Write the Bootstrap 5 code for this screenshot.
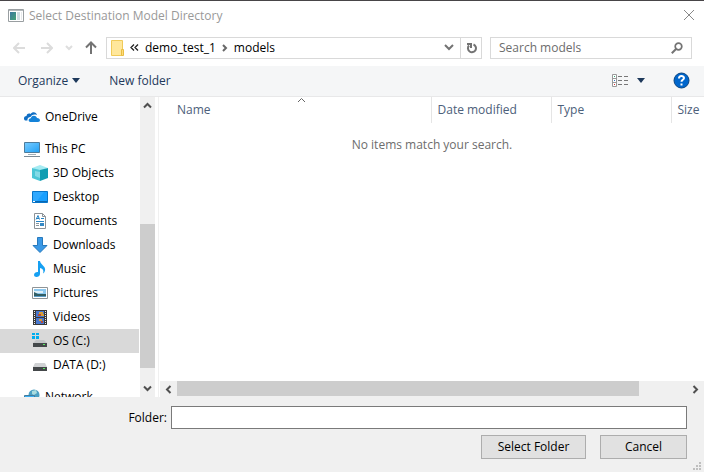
<!DOCTYPE html>
<html lang="en">
<head>
<meta charset="utf-8">
<meta name="viewport" content="width=device-width, initial-scale=1">
<title>Select Destination Model Directory</title>
<link href="https://cdn.jsdelivr.net/npm/bootstrap@5.3.0/dist/css/bootstrap.min.css" rel="stylesheet">
<style>
  body { font-family: "Open Sans", "Noto Sans", sans-serif; font-size: 12px; line-height: 16px; color: #000; background: #fff; overflow: hidden; }
  button, input { font: inherit; color: inherit; }
  svg { display: block; flex: none; }
  .dialog { border-top: 1px solid #484548; }
  .titlebar { height: 32px; padding: 0 8px; color: #999; gap: 5px; }
  .plain { border: 0; background: none; padding: 0; }
  .addressbar { padding: 5px 12px 7px; height: 34px; }
  .field { border: 1px solid #d9d9d9; height: 22px; background: #fff; }
  .nav-tools { width: 94px; padding-left: 1px; gap: 12px; }
  .crumb { color: #000; text-decoration: none; }
  .crumbs { gap: 6px; padding-left: 4px; }
  .search { width: 202px; }
  .search input { border: 0; outline: 0; padding: 0 0 0 8px; min-width: 0; color: #6d6d6d; background: none; }
  .search input::placeholder { color: #6d6d6d; opacity: 1; }
  .refresh { width: 21px; height: 20px; border-left: 1px solid #d9d9d9; }
  .commands { height: 31px; background: #f5f6f7; border-bottom: 1px solid #e8e8e9; color: #1e395b; padding: 0 14px 0 18px; }
  .new-folder { margin-left: 29px; }
  .panes { min-height: 0; }
  .tree { width: 140px; padding-top: 8px; }
  .tree a { height: 24px; flex: none; color: #000; text-decoration: none; padding-left: 24px; gap: 5px; margin-right: 1px; }
  .tree a.child { padding-left: 32px; }
  .tree a.current { background: #d9d9d9; }
  .tree .group { margin-top: 8px; }
  .bar { background: #f0f0f0; }
  .bar-v { width: 15px; }
  .bar-h { height: 16px; }
  .thumb { background: #cdcdcd; }
  .bar-v .thumb { flex: 0 0 48%; }
  .bar-h .thumb { flex: 0 0 85%; height: 15px; }
  .bar-v .before { flex: 1 1 0; }
  .bar-v .after { flex: 0 0 4%; }
  .bar-v button, .bar-h button { width: 17px; height: 17px; flex: none; }
  .bar-v button { width: 15px; }
  .split { width: 5px; border-left: 1px solid #fff; }
  .split::after { content: ""; display: block; width: 1px; height: 100%; margin-left: 2px; background: #f0f0f0; }
  .files { table-layout: fixed; }
  .files th { height: 26px; font-weight: 400; color: #4c607a; padding: 0 6px; border-right: 1px solid #e5e5e5; white-space: nowrap; position: relative; }
  .files th:first-child { padding-left: 17px; }
  .files th:last-child { border: 0; width: 33px; padding-right: 0; }
  .files .mid { width: 120px; }
  .files td { color: #6d6d6d; padding: 14px 0; }
  .sort { position: absolute; left: 137px; top: 0; }
  .footer-bar { background: #f0f0f0; padding: 9px 17px 13px; gap: 6px; position: relative; }
  .folder { border: 1px solid #7a7a7a; height: 23px; background: #fff; padding: 0 4px; border-radius: 0; min-width: 0; }
  .folder-label { width: 150px; }
  .buttons { gap: 14px; }
  .push { border: 1px solid #adadad; background: #e1e1e1; height: 24px; padding: 0; }
  .push.wide { width: 105px; }
  .push.short { width: 87px; }
  .grip { position: absolute; right: 3px; bottom: 2px; }
</style>
<script src="https://cdn.jsdelivr.net/npm/bootstrap@5.3.0/dist/js/bootstrap.bundle.min.js"></script>
</head>
<body>
<div class="dialog d-flex flex-column vh-100">
  <header class="titlebar d-flex align-items-center">
    <svg width="16" height="14" viewBox="0 0 16 14"><defs><linearGradient id="gw" x2="1" y2="1"><stop stop-color="#3a78a0"/><stop offset="1" stop-color="#46a376"/></linearGradient></defs><path fill="#fff" stroke="#999ea1" d="M.5.5h15v12H.5z"/><path fill="#b4babd" d="M1 1h14v1H1z"/><path fill="url(#gw)" d="M2 3h6v8H2z"/><path fill="#cfdde2" d="M9 3h3v8H9z"/><path fill="#e6e9eb" d="M13 3h1v8h-1z"/></svg>
    <span class="flex-grow-1">Select Destination Model Directory</span>
    <button class="plain" aria-label="Close"><svg width="14" height="14" viewBox="0 0 14 14"><path d="M2 1l10 10M12 1L2 11" stroke="#888" fill="none"/></svg></button>
  </header>

  <div class="addressbar d-flex align-items-center">
    <div class="nav-tools d-flex align-items-center">
      <button class="plain" aria-label="Back"><svg width="12" height="12" viewBox="0 0 12 12"><path d="M12 6H1M6 1L1 6l5 5" stroke="#dcdcdc" stroke-width="2" fill="none"/></svg></button>
      <button class="plain ms-1" aria-label="Forward"><svg width="12" height="12" viewBox="0 0 12 12"><path d="M0 6h11M6 1l5 5-5 5" stroke="#dcdcdc" stroke-width="2" fill="none"/></svg></button>
      <button class="plain" aria-label="Recent locations"><svg width="8" height="6" viewBox="0 0 8 6"><path d="M1 1l3 3 3-3" stroke="#dedede" stroke-width="2" fill="none"/></svg></button>
      <button class="plain me-auto" aria-label="Up"><svg width="12" height="13" viewBox="0 0 12 13"><path d="M6 13V2M1 6.500l5-5 5 5" stroke="#737373" stroke-width="2" fill="none"/></svg></button>
    </div>
    <nav class="field crumbs d-flex align-items-center flex-grow-1" aria-label="Address">
      <svg width="13" height="16" viewBox="0 0 13 16"><path fill="#ffe79b" stroke="#f0ca59" d="M.5.5h11v15H.5z"/><path fill="#ffdc78" stroke="#e9bd43" d="M10.500 9.500h2v6h-2z"/></svg>
      <svg width="9" height="7" viewBox="0 0 9 7"><path d="M4 .5L1 3.500l3 3M8 .5L5 3.500l3 3" stroke="#222" stroke-width="1.300" fill="none"/></svg>
      <a class="crumb" href="#">demo_test_1</a>
      <svg width="6" height="8" viewBox="0 0 6 8"><path d="M1 1l3 3-3 3" stroke="#686868" stroke-width="2" fill="none"/></svg>
      <a class="crumb flex-grow-1" href="#">models</a>
      <button class="plain" aria-label="Previous locations"><svg width="10" height="7" viewBox="0 0 10 7"><path d="M1 1l4 4 4-4" stroke="#737373" stroke-width="2" fill="none"/></svg></button>
      <button class="plain refresh d-flex align-items-center justify-content-center" aria-label="Refresh"><svg width="11" height="12" viewBox="0 0 11 12"><path d="M7.500 2.500A4 4 0 1 1 3 3.500" stroke="#737373" stroke-width="2" fill="none"/><path d="M1 1h5v5H4V3H1z" fill="#737373"/></svg></button>
    </nav>
    <div class="field search d-flex align-items-center ms-2">
      <input class="flex-grow-1" type="text" placeholder="Search models" aria-label="Search models">
      <svg class="me-2" width="12" height="12" viewBox="0 0 12 12"><circle cx="7.500" cy="4.500" r="3.300" fill="none" stroke="#737373" stroke-width="1.700"/><path d="M5.500 6.500L.8 11.200" stroke="#737373" stroke-width="2"/></svg>
    </div>
  </div>

  <div class="commands d-flex align-items-center flex-shrink-0">
    <button class="plain d-flex align-items-center">Organize <svg class="ms-1" width="8" height="5" viewBox="0 0 8 5"><path fill="#1e395b" d="M0 0h8L4 5z"/></svg></button>
    <button class="plain new-folder">New folder</button>
    <button class="plain ms-auto d-flex align-items-center" aria-label="Change view"><svg width="17" height="13" viewBox="0 0 17 13"><path fill="#fff" stroke="#999" d="M.5.500h4v12h-4zM.5 4.500h4M.5 8.500h4"/><path fill="#3a7" d="M2 2h1v1H2z"/><path fill="#37c" d="M2 6h1v1H2z"/><path fill="#d33" d="M2 10h1v1H2z"/><path stroke="#777" stroke-dasharray="4 2" d="M6 2.500h10M6 6.500h10M6 10.500h10"/></svg><svg class="ms-2" width="8" height="5" viewBox="0 0 8 5"><path fill="#1e395b" d="M0 0h8L4 5z"/></svg></button>
    <button class="plain ms-4 ps-1" aria-label="Help"><svg width="17" height="17" viewBox="0 0 17 17"><circle cx="8.500" cy="8.500" r="7.500" fill="#0066cc" stroke="#0b4580"/><path d="M6 6.500C6 3.300 11 3.500 11 6c0 1.800-2.500 1.800-2.500 3.800" fill="none" stroke="#fff" stroke-width="2"/><path fill="#fff" d="M7.500 11.500h2v2h-2z"/></svg></button>
  </div>

  <main class="panes d-flex flex-grow-1">
    <nav class="tree d-flex flex-column flex-shrink-0 overflow-hidden" aria-label="Folders">
      <a href="#" class="d-flex align-items-center"><svg width="16" height="16" viewBox="0 0 16 16"><path fill="#0f6ec4" d="M1 11.500c-2-1.500-1-4.500 1.500-4.500C3 4.500 5 4 6.500 5 8.500 2 12.500 3 13 6 9.500 5 7.500 6 6.500 8 4.500 8 3 9.500 3.500 11.500z"/><path fill="#1482d8" d="M6.500 13C4 13 4 9.500 6.800 9.300 7.500 6 12 6 13 9c3.500 0 4 4 1 4z"/></svg>OneDrive</a>
      <a href="#" class="d-flex align-items-center group"><svg width="16" height="16" viewBox="0 0 16 16"><defs><linearGradient id="gb" x2="1" y2="1"><stop stop-color="#79ccff"/><stop offset="1" stop-color="#20a0f5"/></linearGradient></defs><path fill="url(#gb)" stroke="#4d7c9c" d="M.5 1.500h15v10H.5z"/><path stroke="#a3afb7" d="M4 13.500h8"/><path stroke="#7c8b96" d="M0 15.500h16"/></svg>This PC</a>
      <a href="#" class="d-flex align-items-center child"><svg width="16" height="16" viewBox="0 0 16 16"><path fill="#a6ebf2" d="M0 3l8-3 8 3-8 3z"/><path fill="#4cc6d6" d="M0 3l8 2v11l-8-3z"/><path fill="#0f9db2" d="M16 3L8 5v11l8-3z"/><path fill="#a8e8f0" d="M3 6l5 1v6l-5-2z" opacity=".6"/></svg>3D Objects</a>
      <a href="#" class="d-flex align-items-center child"><svg width="16" height="16" viewBox="0 0 16 16"><path fill="#1aa0ff" stroke="#0876ca" d="M.5 2.500h15v11H.5z"/><path fill="#62c1ff" d="M1 3h11L5 12H1z" opacity=".3"/><path fill="#0a67b0" d="M1 12h14v1H1z"/><path fill="#fff" d="M1 12h2v1H1z"/></svg>Desktop</a>
      <a href="#" class="d-flex align-items-center child"><svg width="16" height="16" viewBox="0 0 16 16"><path fill="#fff" stroke="#8c9297" d="M2.500.5h8l3 3v12h-11z"/><path fill="none" stroke="#8c9297" d="M10.500.5v3h3"/><path stroke="#2583c4" fill="none" d="M4 6.500l2-4 1.500 4M5 5.500h2M9 5.500h3M4 8.500h8"/><path fill="#3589c5" d="M8 10h4v3H8z"/><path stroke="#8a949b" d="M4 10.500h3M4 12.500h3"/></svg>Documents</a>
      <a href="#" class="d-flex align-items-center child"><svg width="16" height="16" viewBox="0 0 16 16"><path fill="#3b99e6" stroke="#2779bc" d="M5.500.5h5v8H15l-7 7-7-7h4.500z"/></svg>Downloads</a>
      <a href="#" class="d-flex align-items-center child"><svg width="16" height="16" viewBox="0 0 16 16"><path fill="#16a0f2" d="M6 0h2c.5 4 6 5 5 9.500-.3 1.500-1.200 2.500-2 3 1-3.500 0-4.500-3-5.500V13c0 3.500-6 4-6 1 0-2 2-3.200 4-3z"/></svg>Music</a>
      <a href="#" class="d-flex align-items-center child"><svg width="16" height="16" viewBox="0 0 16 16"><path fill="#fff" stroke="#8e9497" d="M.5 2.500h15v11H.5z"/><path fill="#8cc8ef" d="M2 4h12v8H2z"/><path fill="#dff0f8" d="M2 6h9v2H2z"/><path fill="#315e65" d="M2 7l4 2h8v2H2z"/><path fill="#5a9cc8" d="M2 11h12v1H2z"/></svg>Pictures</a>
      <a href="#" class="d-flex align-items-center child"><svg width="16" height="16" viewBox="0 0 16 16"><path fill="#393939" d="M1 1h14v15H1z"/><path stroke="#eee" stroke-dasharray="1 1" d="M2.500 2v13M13.500 2v13"/><path fill="#4777cf" d="M4 2h8v6H4zM4 9h8v6H4z"/><path fill="#d89d34" d="M7 3h4v2H7zM9 5h3v2H9zM7 10h3v2H7z"/><path fill="#b64b3b" d="M6 5h3v2H6zM9 12h2v2H9z"/></svg>Videos</a>
      <a href="#" class="d-flex align-items-center child current" aria-current="true"><svg width="16" height="16" viewBox="0 0 16 16"><path fill="#00adef" d="M0 0h3v2H0zM4 0h3v2H4zM0 3h3v3H0zM4 3h3v3H4z"/><path fill="#c3c5c7" d="M4 7h8l3 3H1z"/><path fill="#44484a" d="M1 10h14v4H1z"/><path fill="#5bea62" d="M11 11h2v1h-2z"/></svg>OS (C:)</a>
      <a href="#" class="d-flex align-items-center child"><svg width="16" height="16" viewBox="0 0 16 16"><path fill="#d0d2d4" d="M3 6h10l2 4H1z"/><path fill="#44484a" d="M1 10h14v4H1z"/><path fill="#5bea62" d="M11 11h2v1h-2z"/></svg>DATA (D:)</a>
      <a href="#" class="d-flex align-items-center group"><svg width="16" height="16" viewBox="0 0 16 16"><circle cx="10" cy="6" r="5.500" fill="#4ba0c3"/><path fill="#a9dcdf" d="M8 2l4-1 1 3-3 2-2-1z"/><path fill="#39aef3" stroke="#427c9d" d="M.5 6.500h10v7H.5z"/></svg>Network</a>
    </nav>
    <div class="bar bar-v d-flex flex-column flex-shrink-0">
      <button class="plain d-flex align-items-center justify-content-center" aria-label="Scroll up"><svg width="9" height="7" viewBox="0 0 9 7"><path d="M1 5.500L4.500 2 8 5.500" stroke="#505050" stroke-width="2" fill="none"/></svg></button>
      <div class="before"></div><div class="thumb"></div><div class="after"></div>
      <button class="plain d-flex align-items-center justify-content-center" aria-label="Scroll down"><svg width="9" height="7" viewBox="0 0 9 7"><path d="M1 1.500L4.500 5 8 1.500" stroke="#505050" stroke-width="2" fill="none"/></svg></button>
    </div>
    <div class="split flex-shrink-0"></div>
    <section class="d-flex flex-column flex-grow-1 overflow-hidden">
      <table class="files w-100">
        <thead><tr><th>Name<svg class="sort" width="9" height="6" viewBox="0 0 9 6"><path d="M1 5l3.500-3.500L8 5" stroke="#666" fill="none"/></svg></th><th class="mid">Date modified</th><th class="mid">Type</th><th>Size</th></tr></thead>
        <tbody><tr><td colspan="4" class="text-center">No items match your search.</td></tr></tbody>
      </table>
      <div class="bar bar-h d-flex mt-auto">
        <button class="plain d-flex align-items-center justify-content-center" aria-label="Scroll left"><svg width="7" height="9" viewBox="0 0 7 9"><path d="M5.500 1L2 4.500 5.500 8" stroke="#505050" stroke-width="2" fill="none"/></svg></button>
        <div class="thumb"></div>
        <button class="plain ms-auto d-flex align-items-center justify-content-center" aria-label="Scroll right"><svg width="7" height="9" viewBox="0 0 7 9"><path d="M1.500 1L5 4.500 1.500 8" stroke="#505050" stroke-width="2" fill="none"/></svg></button>
      </div>
    </section>
  </main>

  <footer class="footer-bar d-flex flex-column flex-shrink-0">
    <div class="d-flex align-items-center">
      <label class="folder-label text-end flex-shrink-0" for="folder">Folder:</label>
      <input class="folder flex-grow-1 ms-1" id="folder" type="text">
    </div>
    <div class="buttons d-flex justify-content-end">
      <button class="push wide">Select Folder</button>
      <button class="push short">Cancel</button>
    </div>
    <svg class="grip" width="8" height="8" viewBox="0 0 8 8"><path fill="#bfbfbf" d="M6 0h2v2H6zM3 3h2v2H3zM6 3h2v2H6zM0 6h2v2H0zM3 6h2v2H3zM6 6h2v2H6z"/></svg>
  </footer>
</div>
</body>
</html>
